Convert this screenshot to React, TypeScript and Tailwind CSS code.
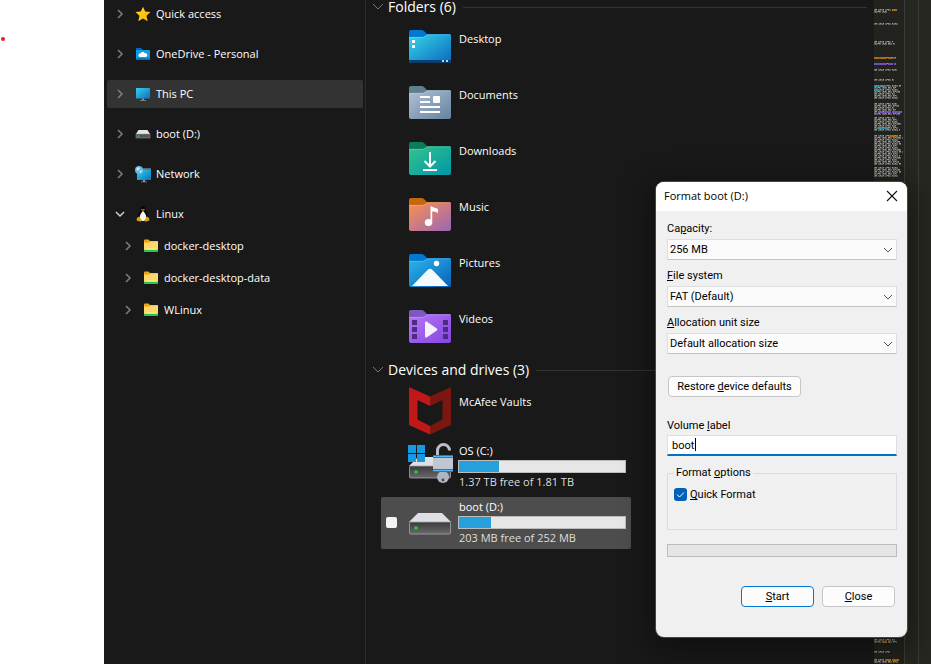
import React from "react";

const FONT = "font-['Open_Sans','Noto_Sans',sans-serif]";

function Chevron({ open = false, className = "" }: { open?: boolean; className?: string }) {
  return (
    <svg viewBox="0 0 12 12" className={`h-3 w-3 shrink-0 ${className}`} fill="none" stroke="currentColor">
      {open ? <path d="M2 4l4 4 4-4" /> : <path d="M4 2l4 4-4 4" />}
    </svg>
  );
}

const small = "h-4 w-4 shrink-0";

function StarIcon() {
  return (
    <svg viewBox="0 0 16 16" className={small}>
      <defs>
        <linearGradient id="star" x1="0" y1="0" x2="1" y2="1">
          <stop offset="0" stopColor="#ffd928" />
          <stop offset="1" stopColor="#fdb300" />
        </linearGradient>
      </defs>
      <path fill="url(#star)" d="M8 .8l2.200 4.800 5.300.5-4 3.700 1.200 5.500L8 12.400l-4.700 2.900 1.200-5.500-4-3.700 5.300-.5z" />
    </svg>
  );
}

function OneDriveIcon() {
  return (
    <svg viewBox="0 0 16 16" className={small}>
      <path fill="#0067c0" d="M1 2h5l2 2v4H1z" />
      <rect x="1" y="4" width="14" height="9.500" rx=".6" fill="#139bdf" />
      <path fill="#0c7cc9" d="M1 12h14v1.500H1z" />
      <path fill="#fff" d="M5 11a1.700 1.700 0 0 1 .3-3.400 2.400 2.400 0 0 1 4.500-.3A1.900 1.900 0 0 1 11 11z" />
    </svg>
  );
}

function Monitor() {
  return (
    <>
      <defs>
        <linearGradient id="screen" x1="0" y1="0" x2="1" y2="1">
          <stop offset="0" stopColor="#35d3ea" />
          <stop offset="1" stopColor="#0a6fc2" />
        </linearGradient>
      </defs>
      <rect x="1" y="2" width="14" height="10.500" rx=".5" fill="url(#screen)" />
      <path fill="#8b949c" d="M7 12.500h2V14h2v.800H5V14h2z" />
    </>
  );
}

function PcIcon() {
  return (
    <svg viewBox="0 0 16 16" className={small}>
      <Monitor />
    </svg>
  );
}

function NetworkIcon() {
  return (
    <svg viewBox="0 0 16 16" className={`${small} overflow-visible`}>
      <path fill="#5c656d" d="M5 2h11v2H5z" />
      <g transform="translate(1 1.500)">
        <Monitor />
      </g>
      <circle cx="4" cy="4" r="4" fill="#63b5df" />
      <path fill="#c8ecfa" d="M1.500 2.500l2-1.500 1.500 1-1 2-2 1zM4.500 5l2-1 .5 1.500-1.500 2z" />
    </svg>
  );
}

function SmallDriveIcon() {
  return (
    <svg viewBox="0 0 16 16" className={small}>
      <path fill="#e2e4e8" d="M3.500 4h9L15 8H1z" />
      <rect x="1" y="8" width="14" height="4" fill="#555557" stroke="#9a9a9c" strokeWidth=".5" />
      <circle cx="3.500" cy="10.300" r=".8" fill="#31d843" />
    </svg>
  );
}

function TuxIcon() {
  return (
    <svg viewBox="0 0 16 16" className={small}>
      <path fill="#050505" d="M8 .5c2 0 2.700 1.500 2.700 3.500 0 2 3 4.500 3 8.500L11 15H5l-2.700-2.500c0-4 3-6.500 3-8.500C5.300 2 6 .5 8 .5z" />
      <path fill="#f4f4f4" d="M8 5.500c1.500 0 3.500 4 3.500 7C11 14.500 9 15 8 15s-3-.5-3.500-2.500c0-3 2-7 3.500-7z" />
      <circle cx="7" cy="3.500" r=".6" fill="#ccc" />
      <circle cx="9" cy="3.500" r=".6" fill="#ccc" />
      <path fill="#d9a013" d="M6.500 4.800L8 4.200l1.500.6L8 6zM3.700 10.500l2.800 3.500-.9 1.700-4-1.200.3-2.400zM12.300 10.500L9.500 14l.9 1.700 4-1.200-.3-2.400z" />
    </svg>
  );
}

function LinuxFolderIcon() {
  return (
    <svg viewBox="0 0 16 16" className={small}>
      <path fill="#f0a30c" d="M1 2.500c0-.6.4-1 1-1h3.500l1.500 1.500h8v3H1z" />
      <path fill="#ffd869" d="M1 4.500h5L7.500 3.500H15V14H1z" />
      <path fill="#eefbe7" d="M3 10.800h10l1 1H2z" />
      <path fill="#2ac64c" d="M1 11.800h14V14H1z" />
    </svg>
  );
}

type FolderKind = "desktop" | "documents" | "downloads" | "music" | "pictures" | "videos";

const folderColors: Record<FolderKind, [string, string, string]> = {
  desktop: ["#0078d4", "#36d7e8", "#0a68be"],
  documents: ["#5f7f8c", "#b0c0d8", "#66839f"],
  downloads: ["#0b7d5b", "#33c58c", "#0097a8"],
  music: ["#c4680f", "#fb9150", "#9a65b6"],
  pictures: ["#0078d4", "#2cb4ea", "#0762b8"],
  videos: ["#7e57c2", "#b578f8", "#8544dd"],
};

function FolderIcon({ kind }: { kind: FolderKind }) {
  const [back, from, to] = folderColors[kind];
  const id = `folder-${kind}`;
  return (
    <svg viewBox="0 0 48 48" className="h-12 w-12 shrink-0">
      <defs>
        <linearGradient id={id} x1="0" y1="0" x2="1" y2="1">
          <stop offset="0" stopColor={from} />
          <stop offset="1" stopColor={to} />
        </linearGradient>
      </defs>
      <path fill={back} d="M3 10c0-1.200.8-2 2-2h10.500c1 0 1.700.3 2.500 1l3 3h22c1.200 0 2 .8 2 2v8H3z" />
      <path fill={`url(#${id})`} d="M3 15h13c1.200 0 2-.3 3-1l1.500-1c.5-.4 1-.5 1.700-.5H44c.6 0 1 .5 1 1V39c0 1.200-.8 2-2 2H5c-1.200 0-2-.8-2-2z" />
      <path fill="none" stroke="#fff" strokeOpacity=".3" strokeWidth=".7" d="M3 15.300h13c1.200 0 2-.3 3-1l1.500-1c.5-.4 1-.5 1.700-.5H44.500" />
      {kind === "desktop" && (
        <>
          <path fill="#0a3f70" d="M3 38h42v1c0 1.200-.8 2-2 2H5c-1.200 0-2-.8-2-2z" />
          <path fill="#fff" d="M6 18h3v3H6zM6 23h3v3H6z" />
          <path fill="#c4d4e4" d="M36 38h2v2h-2zM40 38h2v2h-2z" />
        </>
      )}
      {kind === "documents" && (
        <>
          <path fill="#fff" d="M14 18h10v2H14zM14 23h10v2H14zM14 28h20v2H14zM14 33h20v2H14z" />
          <rect x="27" y="18" width="7" height="7" rx="1" fill="#fff" />
        </>
      )}
      {kind === "downloads" && (
        <path d="M24 18v14M18.500 27l5.500 5.500 5.500-5.500M17 36h14" fill="none" stroke="#fff" strokeWidth="2" />
      )}
      {kind === "music" && (
        <>
          <ellipse cx="22.500" cy="32.500" rx="3.700" ry="3.600" fill="#fff" />
          <path fill="#fff" d="M24.500 16c3 2 5 1.600 7.500 3v4c-2-1.300-4-1.300-5.800-1.500v11h-1.700z" />
        </>
      )}
      {kind === "pictures" && (
        <>
          <circle cx="30.500" cy="17.500" r="2.700" fill="#fff" />
          <path fill="#f4f9fe" d="M6 40l15.500-16c1.600-1.600 3.400-1.600 5 0L42 40z" />
        </>
      )}
      {kind === "videos" && (
        <>
          <path fill="#4b2c82" d="M6 18h5v5H6zM6 25h5v5H6zM6 32h5v5H6zM37 18h5v5h-5zM37 25h5v5h-5zM37 32h5v5h-5z" />
          <path fill="#f3f0f7" d="M19 20.500c0-1 .8-1.400 1.600-.9l10.200 7c.7.500.7 1.300 0 1.800l-10.200 7c-.8.500-1.600.1-1.600-.9z" />
        </>
      )}
    </svg>
  );
}

function McAfeeIcon() {
  return (
    <svg viewBox="0 0 48 48" className="h-12 w-12 shrink-0">
      <path fill="#c01818" d="M3 0l21 9.500v9.500l-12.500-6v19.500l12.500 6.500v8.500L3 38z" />
      <path fill="#7b1610" d="M45 0l-21 9.500v9.500l12.500-6v19.500l-12.500 6.500v8.500l21-9.500z" />
    </svg>
  );
}

function DriveBody() {
  return (
    <>
      <defs>
        <linearGradient id="drive-front" x1="0" y1="0" x2="0" y2="1">
          <stop offset="0" stopColor="#3b3b3d" />
          <stop offset="1" stopColor="#69696b" />
        </linearGradient>
      </defs>
      <path fill="#dfe0e4" d="M12 15h24l9 9H3z" />
      <rect x="3.500" y="24" width="41" height="12" rx="1" fill="url(#drive-front)" stroke="#a5a5a8" strokeWidth=".8" />
      <circle cx="10" cy="30" r="1.800" fill="#1ed52b" />
    </>
  );
}

function DriveIcon() {
  return (
    <svg viewBox="0 0 48 48" className="h-12 w-12 shrink-0">
      <DriveBody />
    </svg>
  );
}

function SystemDriveIcon() {
  return (
    <svg viewBox="0 0 48 48" className="h-12 w-12 shrink-0">
      <DriveBody />
      <path fill="#149ae4" d="M2 3h8v8H2zM11 3h8v8h-8zM2 12h8v8H2zM11 12h8v8h-8z" />
      <path fill="none" stroke="#b8bfc9" strokeWidth="3" d="M31.500 14V8.500a6 6 0 0 1 12 0" />
      <circle cx="37" cy="35" r="6" fill="#b0b6bf" />
      <circle cx="37" cy="38" r="1.400" fill="#454a52" />
      <rect x="27" y="13" width="20" height="17" fill="#c0c7d1" />
      <path fill="#1879d0" d="M27 13h20v3H27zM27 27h20v3H27z" />
      <path fill="#54b8fa" d="M27 14h20v1H27zM27 28h20v1H27z" />
    </svg>
  );
}

interface NavItem {
  label: string;
  icon: React.ReactNode;
  selected?: boolean;
  open?: boolean;
  children?: NavItem[];
}

const navItems: NavItem[] = [
  { label: "Quick access", icon: <StarIcon /> },
  { label: "OneDrive - Personal", icon: <OneDriveIcon /> },
  { label: "This PC", icon: <PcIcon />, selected: true },
  { label: "boot (D:)", icon: <SmallDriveIcon /> },
  { label: "Network", icon: <NetworkIcon /> },
  {
    label: "Linux",
    icon: <TuxIcon />,
    open: true,
    children: [
      { label: "docker-desktop", icon: <LinuxFolderIcon /> },
      { label: "docker-desktop-data", icon: <LinuxFolderIcon /> },
      { label: "WLinux", icon: <LinuxFolderIcon /> },
    ],
  },
];

function NavRow({ item, nested = false }: { item: NavItem; nested?: boolean }) {
  return (
    <button
      type="button"
      className={`flex h-7 w-full items-center rounded-xs text-left ${nested ? "pl-[15px]" : "pl-[7px]"} ${
        item.selected ? "bg-[#333333]" : ""
      }`}
    >
      <Chevron open={item.open} className={`mr-[9px] stroke-[1.5] ${item.open ? "text-[#d0d0d0]" : "text-[#808080]"}`} />
      {item.icon}
      <span className="ml-[5px] whitespace-nowrap">{item.label}</span>
    </button>
  );
}

function Sidebar() {
  return (
    <nav className="w-[262px] shrink-0 border-r border-[#2b2b2b] pr-[2px] pl-[3px]">
      <ul className="flex flex-col gap-3">
        {navItems.map((item) => (
          <li key={item.label}>
            <NavRow item={item} />
            {item.children && (
              <ul className="mt-1 flex flex-col gap-1">
                {item.children.map((child) => (
                  <li key={child.label}>
                    <NavRow item={child} nested />
                  </li>
                ))}
              </ul>
            )}
          </li>
        ))}
      </ul>
    </nav>
  );
}

function SectionHeading({ children, className = "" }: { children: React.ReactNode; className?: string }) {
  return (
    <div className={`flex h-[14px] items-center pr-[7px] pl-[6px] ${className}`}>
      <svg viewBox="0 0 12 12" className="mr-1 h-3 w-3 shrink-0" fill="none" stroke="#777777">
        <path d="M1 3l5 5 5-5" />
      </svg>
      <h2 className="mr-[7px] text-sm leading-[14px] whitespace-nowrap">{children}</h2>
      <span className="h-px flex-1 bg-[#333333]" />
    </div>
  );
}

const folders: { name: string; kind: FolderKind }[] = [
  { name: "Desktop", kind: "desktop" },
  { name: "Documents", kind: "documents" },
  { name: "Downloads", kind: "downloads" },
  { name: "Music", kind: "music" },
  { name: "Pictures", kind: "pictures" },
  { name: "Videos", kind: "videos" },
];

function Drive({
  name,
  detail,
  used,
  icon,
  selected = false,
}: {
  name: string;
  detail: string;
  used: number;
  icon: React.ReactNode;
  selected?: boolean;
}) {
  return (
    <li className={`flex h-[52px] w-[250px] items-center rounded-xs pb-[2px] ${selected ? "bg-[#4d4d4d]" : ""}`}>
      <span className="flex w-[25px] shrink-0 pl-[5px]">
        {selected && (
          <input type="checkbox" aria-label={`Select ${name}`} className="h-[11px] w-[11px] appearance-none rounded-xs bg-[#f3f3f3]" />
        )}
      </span>
      {icon}
      <div className="ml-1 flex w-[168px] flex-col">
        <span className="pl-px leading-4">{name}</span>
        <span className="my-px flex h-[13px] border border-[#bcbcbc] bg-[#e6e6e6]">
          <span className="bg-[#26a0da]" style={{ width: `${used}%` }} />
        </span>
        <span className="pl-px leading-4 text-[#dedede]">{detail}</span>
      </div>
    </li>
  );
}

function Explorer() {
  return (
    <section className={`flex min-w-0 flex-1 bg-[#191919] text-[11px] text-white ${FONT}`}>
      <Sidebar />
      <main className="min-w-0 flex-1">
        <SectionHeading>Folders (6)</SectionHeading>
        <ul className="mt-[6px] ml-[15px] flex flex-col gap-1">
          {folders.map((f) => (
            <li key={f.name} className="flex h-[52px] items-center pl-[25px]">
              <FolderIcon kind={f.kind} />
              <span className="mb-[14px] ml-[5px] leading-4">{f.name}</span>
            </li>
          ))}
        </ul>
        <SectionHeading className="mt-[11px]">Devices and drives (3)</SectionHeading>
        <ul className="mt-2 ml-[15px] flex flex-col gap-1">
          <li className="flex h-[52px] items-center pl-[25px]">
            <McAfeeIcon />
            <span className="mb-[18px] ml-[5px] leading-4">McAfee Vaults</span>
          </li>
          <Drive name="OS (C:)" detail="1.37 TB free of 1.81 TB" used={24} icon={<SystemDriveIcon />} />
          <Drive name="boot (D:)" detail="203 MB free of 252 MB" used={19} icon={<DriveIcon />} selected />
        </ul>
      </main>
    </section>
  );
}

/* [first row, row count, average width] of each block of lines */
const blocks: [number, number, number][] = [
  [9, 2, 18], [23, 1, 27], [41, 2, 25], [57, 1, 24], [63, 1, 23], [69, 1, 24], [79, 1, 24], [85, 7, 27],
  [103, 6, 26], [117, 7, 27], [135, 15, 29], [167, 5, 29], [181, 1, 24], [639, 2, 25], [651, 1, 16], [659, 2, 25],
];

const accents = [
  { x: 18, y: 9, w: 6, color: "#a86a1c" },
  { x: 0, y: 57, w: 18, color: "#a86a1c" },
  { x: 0, y: 63, w: 22, color: "#6f55ad" },
  { x: 0, y: 85, w: 11, color: "#3c8ba0" },
  { x: 0, y: 89, w: 6, color: "#3c8ba0" },
  { x: 4, y: 111, w: 24, color: "#6f55ad" },
  { x: 4, y: 127, w: 10, color: "#3c8ba0" },
  { x: 16, y: 135, w: 8, color: "#a86a1c" },
  { x: 8, y: 641, w: 8, color: "#a86a1c" },
  { x: 12, y: 659, w: 14, color: "#a86a1c" },
];

function Minimap() {
  return (
    <aside className="flex w-[57px] shrink-0 bg-[#262720]">
      <svg className="h-full w-[31px] border-r border-[#3c3d37] bg-[#22231e]">
        {blocks.flatMap(([y, count, width], b) =>
          Array.from({ length: count }, (_, i) => {
            const w = width - ((i * 5 + b * 3) % 7);
            return (
              <g key={`${b}-${i}`}>
                <line x1="0" x2={w} y1={y + i * 2 + 1} y2={y + i * 2 + 1} strokeWidth="2" stroke="#5c5c58" strokeDasharray={i % 2 ? "4 1 2 1 5 1" : "3 1 6 1 2 1"} />
                <line x1="1" x2={w} y1={y + i * 2 + 0.5} y2={y + i * 2 + 0.5} stroke="#979792" strokeDasharray={i % 2 ? "1 2 2 3 1 1" : "2 3 1 2 1 3"} />
              </g>
            );
          }),
        )}
        {accents.map((a) => (
          <line
            key={`${a.x}-${a.y}`}
            x1={a.x}
            x2={a.x + a.w}
            y1={a.y + 1}
            y2={a.y + 1}
            strokeWidth="2"
            strokeDasharray="5 1 7 1"
            stroke={a.color}
          />
        ))}
      </svg>
      <span className="w-[14px] border-r border-[#3a3b35]" />
    </aside>
  );
}

function SelectField({ id, label, value }: { id: string; label: React.ReactNode; value: string }) {
  return (
    <div className="mb-[7px] grid">
      <label htmlFor={id} className="mb-px leading-[18px]">
        {label}
      </label>
      <select
        id={id}
        className="col-start-1 row-start-2 h-[21px] w-full appearance-none border border-b-[#c4c4c4] border-[#dedede] bg-[#fbfbfb] px-[2px] pt-px leading-4"
      >
        <option>{value}</option>
      </select>
      <Chevron open className="pointer-events-none col-start-1 row-start-2 mr-[3px] self-center justify-self-end text-[#555555]" />
    </div>
  );
}

function FormatDialog() {
  return (
    <div
      role="dialog"
      aria-labelledby="dialog-title"
      className="absolute top-[182px] right-6 w-[251px] overflow-hidden rounded-lg bg-[#f0f0f0] font-['Roboto','Noto_Sans',sans-serif] text-[11px] text-black shadow-[0_8px_28px_8px_rgba(0,0,0,0.35)] ring-1 ring-[#454545]"
    >
      <header className="flex h-[29px] items-center justify-between bg-white pr-[9px] pb-[2px] pl-2">
        <h1 id="dialog-title" className={`text-[11px] leading-[18px] ${FONT}`}>
          Format boot (D:)
        </h1>
        <button type="button" aria-label="Close window">
          <svg viewBox="0 0 12 12" className="h-3 w-3" stroke="#111" strokeWidth="1.100">
            <path d="M1 1l10 10M11 1L1 11" />
          </svg>
        </button>
      </header>
      <form className="pt-[9px] pr-[10px] pb-[30px] pl-[11px]">
        <SelectField id="capacity" value="256 MB" label={<>Ca<u>p</u>acity:</>} />
        <SelectField id="filesystem" value="FAT (Default)" label={<><u>F</u>ile system</>} />
        <SelectField id="allocation" value="Default allocation size" label={<><u>A</u>llocation unit size</>} />
        <button
          type="button"
          className="mt-[22px] ml-px flex h-[21px] w-[133px] items-center justify-center rounded border border-[#c6c6c6] bg-[#fcfcfc] pt-px whitespace-nowrap"
        >
          <span>Restore <u>d</u>evice defaults</span>
        </button>
        <label htmlFor="volume" className="mt-5 block leading-[18px]">
          Volume <u>l</u>abel
        </label>
        <div className="relative">
          <input
            id="volume"
            type="text"
            defaultValue="boot"
            className="block h-[21px] w-full border border-b-2 border-[#dcdfe2] border-b-[#0072c9] bg-white px-1 caret-transparent outline-none"
          />
          <span className="absolute top-[3px] left-[28px] h-[13px] w-px bg-black" />
        </div>
        <fieldset className="mt-[9px] h-[65px] border border-[#dcdcdc] px-[6px]">
          <legend className="px-[2px] leading-4">
            Format <u>o</u>ptions
          </legend>
          <div className="mt-[5px] flex items-center">
            <span className="grid">
              <input id="quick" type="checkbox" defaultChecked className="col-start-1 row-start-1 h-[13px] w-[13px] appearance-none rounded-[3px] bg-[#005fb8]" />
              <svg viewBox="0 0 13 13" className="pointer-events-none col-start-1 row-start-1 h-[13px] w-[13px]" fill="none" stroke="#fff">
                <path d="M3 6.500l2.500 2.500L10 4.500" />
              </svg>
            </span>
            <label htmlFor="quick" className="ml-[3px] pt-px leading-4">
              <u>Q</u>uick Format
            </label>
          </div>
        </fieldset>
        <progress
          value={0}
          max={100}
          aria-label="Format progress"
          className="mt-[14px] block h-[13px] w-full appearance-none border border-[#bcbcbc] bg-[#e6e6e6] [&::-webkit-progress-bar]:bg-[#e6e6e6]"
        />
        <div className="mt-[29px] flex justify-end gap-2 pr-[2px]">
          <button type="button" className="h-[21px] w-[73px] rounded border border-[#0078d4] bg-[#fcfcfc] pt-px leading-4">
            <u>S</u>tart
          </button>
          <button type="button" className="h-[21px] w-[73px] rounded border border-[#c6c6c6] bg-[#fcfcfc] pt-px leading-4">
            <u>C</u>lose
          </button>
        </div>
      </form>
    </div>
  );
}

export default function App() {
  return (
    <div className="relative flex min-h-screen overflow-hidden bg-white">
      <div className="w-[104px] shrink-0">
        <span className="mt-[37px] ml-px block h-1 w-1 rounded-full bg-[#ee1c24]" />
      </div>
      <Explorer />
      <Minimap />
      <FormatDialog />
    </div>
  );
}
